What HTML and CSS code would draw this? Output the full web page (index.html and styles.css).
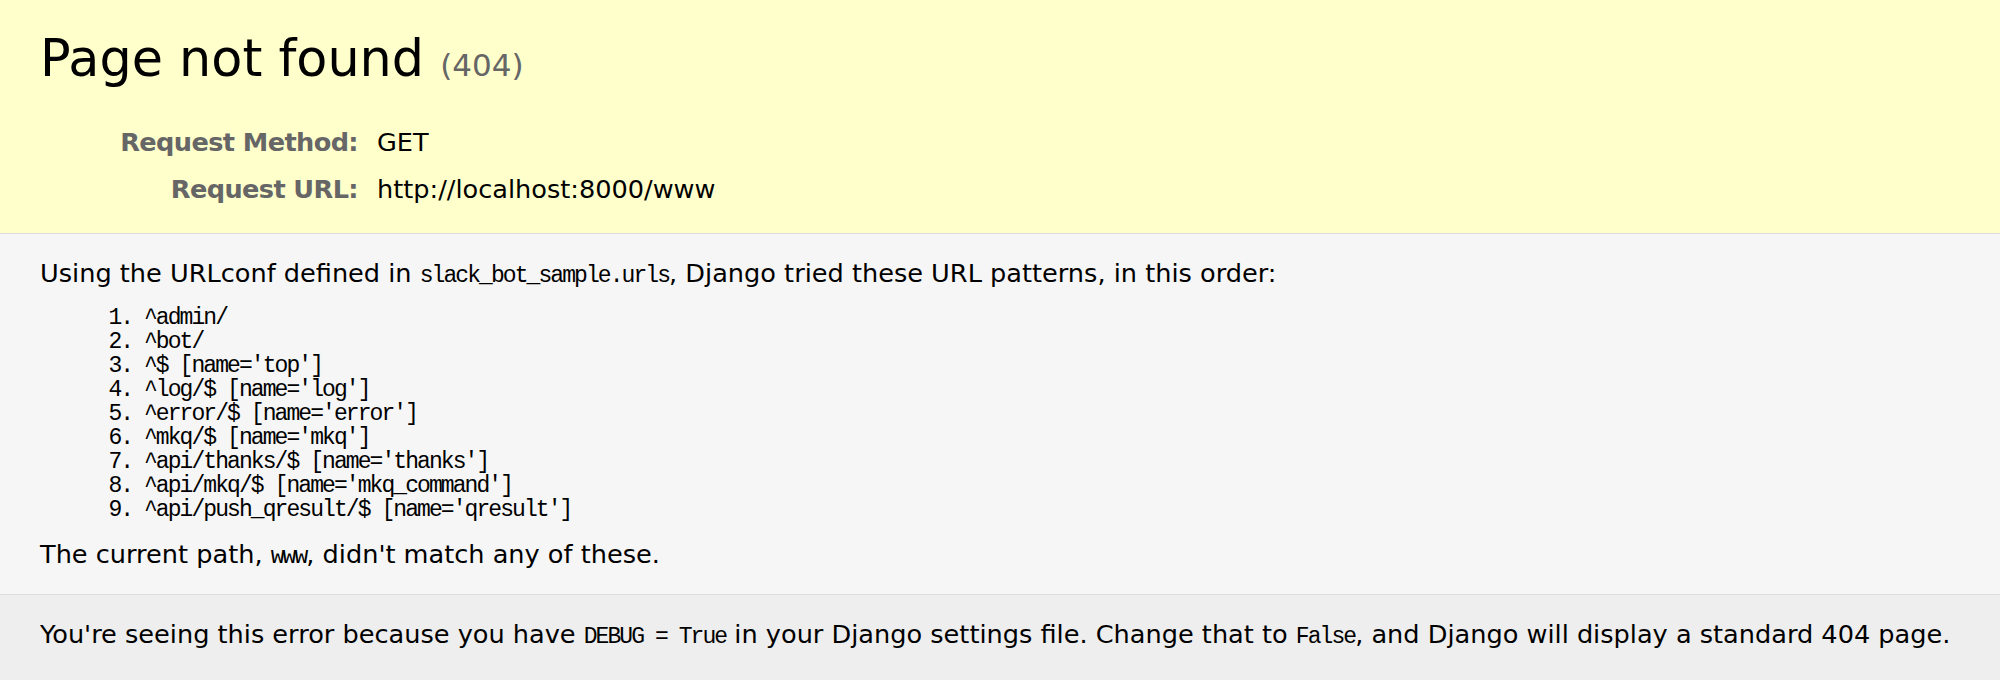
FILE: index.html
```html
<!DOCTYPE html>
<html lang="en">
<head>
<meta charset="utf-8">
<title>Page not found at /www</title>
<link rel="stylesheet" href="styles.css">
</head>
<body>
<div class="summary">
  <h1 class="title">Page not found <span class="title-code">(404)</span></h1>
  <table class="meta">
    <tr>
      <th class="meta-key">Request Method:</th>
      <td class="meta-value">GET</td>
    </tr>
    <tr>
      <th class="meta-key">Request URL:</th>
      <td class="meta-value">http://localhost:8000/www</td>
    </tr>
  </table>
</div>
<div class="info">
  <p class="text">Using the URLconf defined in <code class="code">slack_bot_sample.urls</code>, Django tried these URL patterns, in this order:</p>
  <ol class="patterns">
    <li class="pattern">^admin/</li>
    <li class="pattern">^bot/</li>
    <li class="pattern">^$ [name='top']</li>
    <li class="pattern">^log/$ [name='log']</li>
    <li class="pattern">^error/$ [name='error']</li>
    <li class="pattern">^mkq/$ [name='mkq']</li>
    <li class="pattern">^api/thanks/$ [name='thanks']</li>
    <li class="pattern">^api/mkq/$ [name='mkq_command']</li>
    <li class="pattern">^api/push_qresult/$ [name='qresult']</li>
  </ol>
  <p class="text">The current path, <code class="code">www</code>, didn't match any of these.</p>
</div>
<div class="explanation">
  <p class="text">You're seeing this error because you have <code class="code">DEBUG = True</code> in your Django settings file. Change that to <code class="code">False</code>, and Django will display a standard 404 page.</p>
</div>
</body>
</html>
```

FILE: styles.css
```css
* {
  margin: 0;
  padding: 0;
}

body {
  font-family: "DejaVu Sans", Verdana, sans-serif;
  font-size: 25.6px;
  line-height: 39px;
  color: #000;
  background: #eee;
}

.summary {
  background: #ffc;
  padding: 20px 40px;
  border-bottom: 1px solid #ddd;
}

.title {
  font-size: 50.8px;
  line-height: 78px;
  font-weight: normal;
  margin-bottom: 21px;
}

.title-code {
  font-size: 31px;
  line-height: 1;
  color: #666;
  font-weight: normal;
}

.meta {
  border: none;
  border-collapse: collapse;
  width: 100%;
}

.meta-key,
.meta-value {
  vertical-align: top;
  padding: 4px 6px;
}

.meta-key {
  width: 312px;
  text-align: right;
  color: #666;
  font-weight: bold;
  letter-spacing: -0.6px;
  padding-right: 13px;
}

.meta-value {
  text-align: left;
}

.info {
  background: #f6f6f6;
  padding: 20px 40px;
  border-bottom: 1px solid #ddd;
}

.patterns {
  margin: 13px 104px;
}

.pattern {
  font-family: "Liberation Mono", "DejaVu Sans Mono", monospace;
  font-size: 23px;
  line-height: 24px;
  letter-spacing: -1.93px;
}

.code {
  font-family: "Liberation Mono", "DejaVu Sans Mono", monospace;
  font-size: 23px;
  line-height: 1;
  letter-spacing: -1.93px;
}

.explanation {
  background: #eee;
  padding: 20px 40px;
}
```
